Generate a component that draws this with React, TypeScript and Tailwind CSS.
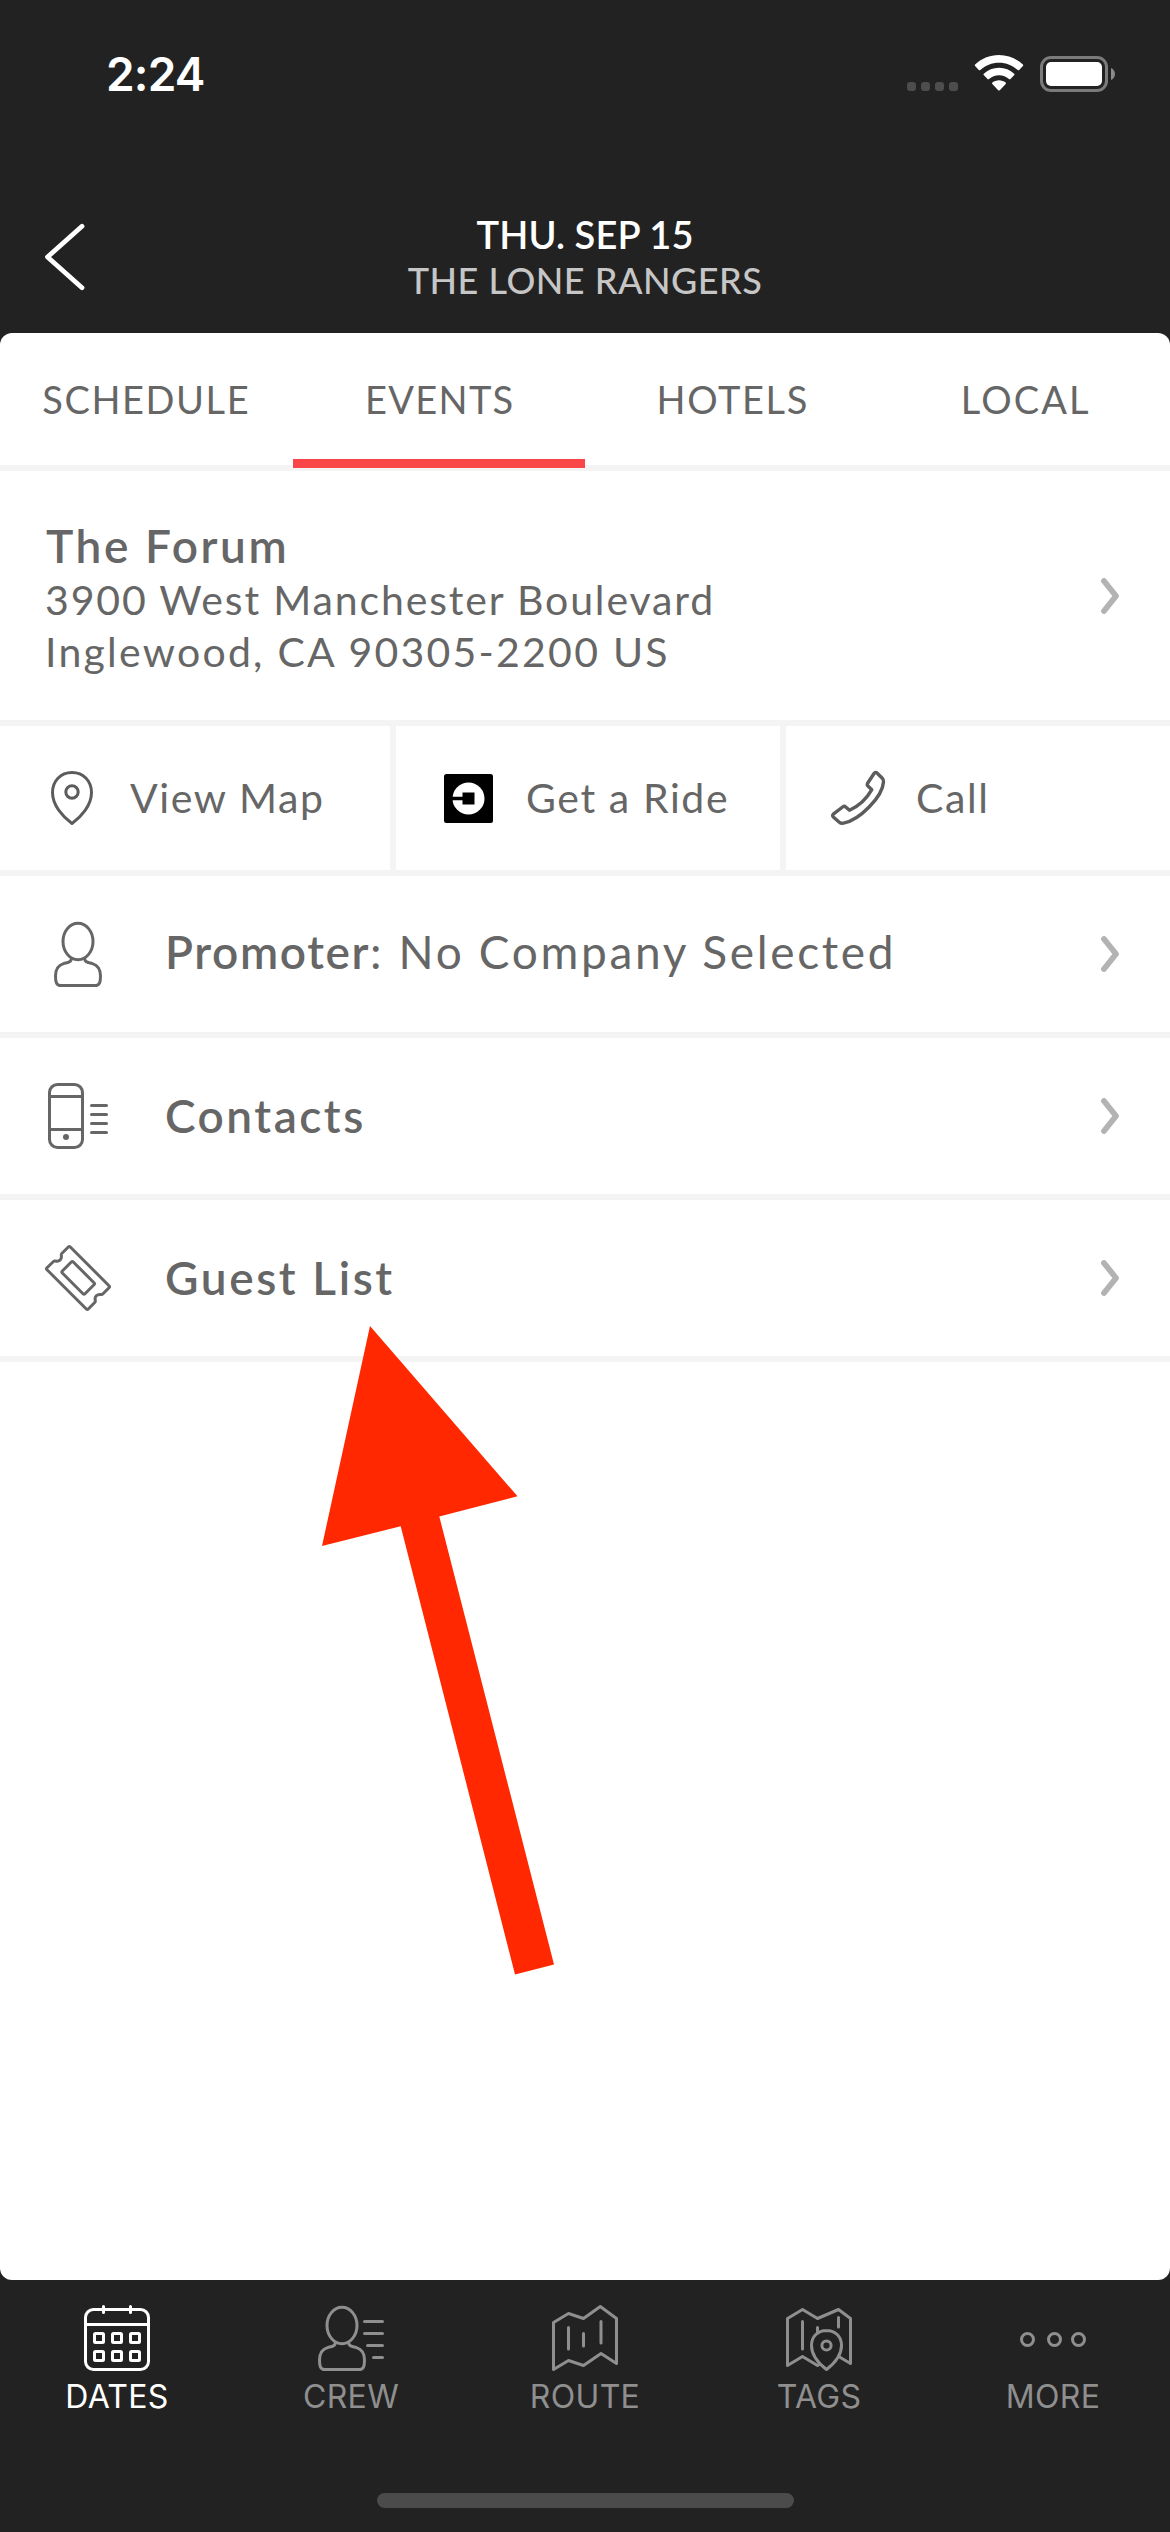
import type { ReactNode } from "react";

const LATO = "font-['Lato',sans-serif]";
const INTER = "font-['Inter',sans-serif]";

function Glyph({ children }: { children: ReactNode }) {
  return (
    <svg
      viewBox="0 0 72 72"
      className="h-[72px] w-[72px] shrink-0"
      fill="none"
      stroke="currentColor"
      strokeWidth="3"
      strokeLinecap="round"
      strokeLinejoin="round"
    >
      {children}
    </svg>
  );
}

function Person() {
  return (
    <>
      <ellipse cx="27" cy="23.5" rx="15" ry="18.2" />
      <path d="M20.3 41.2C19.8 45 15.8 44.6 12.5 45.6C7 47.3 4.5 52.5 4.5 58C4.5 64.5 5.5 67.5 10 67.5H44C48.5 67.5 49.5 64.5 49.5 58C49.5 52.5 47 47.3 41.5 45.6C38.2 44.6 34.2 45 33.7 41.2" />
    </>
  );
}

function ChevronRight() {
  return (
    <svg viewBox="0 0 18 36" className="h-9 w-[18px] shrink-0 text-[#b3b3b3]" fill="none" stroke="currentColor" strokeWidth="5.8" strokeLinecap="round" strokeLinejoin="round">
      <path d="M3 3L15 18L3 33" />
    </svg>
  );
}

function StatusBar() {
  return (
    <div className="flex h-[150px] items-start justify-between pl-[106px] pr-[55px]">
      <div className={`${INTER} mt-[49px] text-[46px] leading-[50px] font-semibold tracking-[-0.8px] text-white`}>2:24</div>
      <div className="mt-[55px] flex h-[37px] items-start">
        <div className="mt-[27px] flex gap-[5px]">
          <span className="h-[9px] w-[9px] rounded-[3px] bg-[#4d4d4d]" />
          <span className="h-[9px] w-[9px] rounded-[3px] bg-[#4d4d4d]" />
          <span className="h-[9px] w-[9px] rounded-[3px] bg-[#4d4d4d]" />
          <span className="h-[9px] w-[9px] rounded-[3px] bg-[#4d4d4d]" />
        </div>
        <svg viewBox="0 0 50 36" className="ml-4 h-9 w-[50px] text-white" fill="currentColor">
          <path d="M25 0C34.3 0 42.8 3.700 48.900 9.600Q49.600 10.300 48.900 11L45.200 15Q44.500 15.700 43.700 15C38.700 10.400 32.200 7.700 25 7.700S11.300 10.400 6.300 15Q5.500 15.700 4.800 15L1.100 11Q0.400 10.300 1.100 9.600C7.200 3.700 15.700 0 25 0Z" />
          <path d="M25 12.800C30.900 12.800 36.200 15 40.200 18.700Q41 19.400 40.300 20.100L36.500 24.100Q35.800 24.800 35 24.100C32.300 21.700 28.800 20.300 25 20.300S17.700 21.700 15 24.100Q14.200 24.800 13.500 24.100L9.700 20.100Q9 19.400 9.800 18.700C13.800 15 19.100 12.800 25 12.800Z" />
          <path d="M25 25.300C27.500 25.300 29.800 26.200 31.600 27.600Q32.300 28.200 31.700 29L25.800 35.200Q25 36 24.200 35.200L18.300 29Q17.700 28.200 18.400 27.600C20.200 26.200 22.500 25.300 25 25.300Z" />
        </svg>
        <svg viewBox="0 0 75 36" className="ml-4 mt-px h-9 w-[75px]">
          <rect x="1.500" y="1.500" width="65" height="33" rx="9.500" fill="none" stroke="#7b7b7b" strokeWidth="3" />
          <rect x="6" y="6" width="56" height="24" rx="5" fill="white" />
          <path d="M71 12C76.300 14 76.300 22 71 24Z" fill="#8a8a8a" />
        </svg>
      </div>
    </div>
  );
}

function Header() {
  return (
    <header className="grid h-[183px] grid-cols-[170px_1fr_170px]">
      <svg viewBox="0 0 40 68" className="ml-[45px] mt-[73px] h-[68px] w-10 text-white" fill="none" stroke="currentColor" strokeWidth="4.800" strokeLinecap="round" strokeLinejoin="round">
        <path d="M37 3.300L2.500 34L37 64.700" />
      </svg>
      <div className={`${LATO} pt-[61px] text-center`}>
        <div className="text-[38px] leading-[46px] font-semibold tracking-[0.1px] text-white">THU. SEP 15</div>
        <div className="text-[36px] leading-[46px] font-medium tracking-[0.5px] text-[#c6c6c6]">THE LONE RANGERS</div>
      </div>
    </header>
  );
}

function Tab({ label, active, className }: { label: string; active?: boolean; className: string }) {
  return (
    <div className={`relative flex items-center justify-center text-[38px] leading-[46px] text-[#666] ${className}`}>
      {label}
      {active && <span className="absolute inset-x-0 -bottom-[3px] h-[9px] bg-[#f84649]" />}
    </div>
  );
}

function Row({ icon, children, className }: { icon: ReactNode; children: ReactNode; className: string }) {
  return (
    <div className="flex h-[162px] items-center border-b-[6px] border-[#f4f4f4] pl-[42px] pr-[51px]">
      <Glyph>{icon}</Glyph>
      <div className={`ml-[51px] flex-1 text-[46px] leading-[56px] font-semibold ${className}`}>{children}</div>
      <ChevronRight />
    </div>
  );
}

function NavItem({ label, active, children }: { label: string; active?: boolean; children: ReactNode }) {
  return (
    <div className={`flex flex-col items-center ${active ? "text-white" : "text-[#8f8f8f]"}`}>
      <Glyph>{children}</Glyph>
      <span className={`${INTER} text-[32px] leading-[45px] tracking-[0.3px]`}>{label}</span>
    </div>
  );
}

export default function App() {
  return (
    <div className="relative flex h-[2532px] w-[1170px] flex-col overflow-hidden bg-[#222]">
      <StatusBar />
      <Header />

      <main className={`${LATO} h-[1947px] overflow-hidden rounded-[12px] bg-white text-[#666]`}>
        <nav className="grid h-[138px] grid-cols-4 border-b-[6px] border-[#f4f4f4]">
          <Tab label="SCHEDULE" className="tracking-[1.6px]" />
          <Tab label="EVENTS" active className="pl-[2px] tracking-[1.3px]" />
          <Tab label="HOTELS" className="pl-[3px] tracking-[1.6px]" />
          <Tab label="LOCAL" className="pl-[4px] tracking-[2.1px]" />
        </nav>

        <section className="flex h-[255px] items-start border-b-[6px] border-[#f4f4f4] pl-[46px] pr-[51px] pt-[49px]">
          <div className="flex-1">
            <h1 className="text-[46px] leading-[52px] font-semibold tracking-[2.6px]">The Forum</h1>
            <p className="-ml-px text-[41px] leading-[56px] tracking-[1.85px]">3900 West Manchester Boulevard</p>
            <p className="-ml-px text-[41px] leading-[48px] tracking-[2.25px]">Inglewood, CA 90305-2200 US</p>
          </div>
          <div className="pt-[58px]">
            <ChevronRight />
          </div>
        </section>

        <section className="grid h-[150px] grid-cols-3 border-b-[6px] border-[#f4f4f4] text-[41px] leading-[50px]">
          <div className="flex items-center pl-12">
            <svg viewBox="0 0 48 60" className="h-[60px] w-12 text-[#5c5c5c]" fill="none" stroke="currentColor" strokeWidth="3" strokeLinejoin="round">
              <path d="M24 4.500C12.500 4.500 4.500 13 4.500 24.500C4.500 37.500 15 49 24 55.500C33 49 43.500 37.500 43.500 24.500C43.500 13 35.500 4.500 24 4.500Z" />
              <circle cx="24" cy="24" r="6.200" />
            </svg>
            <span className="ml-[34px] tracking-[1.6px]">View Map</span>
          </div>
          <div className="flex items-center border-l-[6px] border-[#f4f4f4] pl-12">
            <svg viewBox="0 0 49 49" className="h-[49px] w-[49px]">
              <rect width="49" height="49" rx="2.500" fill="black" />
              <circle cx="24.500" cy="24.500" r="16" fill="white" />
              <path d="M8 22.800H18.500V18.500H30.500V30.500H18.500V26.200H8Z" fill="black" />
            </svg>
            <span className="ml-[33px] tracking-[1.6px]">Get a Ride</span>
          </div>
          <div className="flex items-center border-l-[6px] border-[#f4f4f4] pl-[42px]">
            <svg viewBox="0 0 60 60" className="h-[60px] w-[60px] text-[#5c5c5c]" fill="none" stroke="currentColor" strokeWidth="3.400" strokeLinejoin="round">
              <path d="M46.200 5.200Q47.600 4 49 5L54.300 10.200Q55.700 11.600 55.500 14C54.500 29 31.500 52 15.500 55.200Q13 55.700 11.300 54.200L5.300 49Q3.900 47.600 5.300 46.200L14.600 39Q16.300 37.700 17.700 39L21.500 42.300C30 38.500 38.500 31 43.800 21.700L40.200 18.300Q38.700 16.900 39.600 15.200Z" />
            </svg>
            <span className="ml-[28px] tracking-[1.6px]">Call</span>
          </div>
        </section>

        <Row
          className="pb-[5px]"
          icon={
            <g transform="translate(9 0)">
              <Person />
            </g>
          }
        >
          <span className="tracking-[1.6px]">Promoter</span>
          <span className="font-normal tracking-[2.65px]">: No Company Selected</span>
        </Row>
        <Row
          className="tracking-[2.5px]"
          icon={
            <>
              <rect x="7.500" y="4.500" width="33" height="63" rx="8" />
              <path d="M7.500 16.500H40.500M7.500 49.500H40.500" />
              <path d="M49.500 25.500H64.500M49.500 34.500H64.500M49.500 43.500H64.500M49.500 52.500H64.500" />
              <circle cx="24" cy="57" r="3" fill="currentColor" stroke="none" />
            </>
          }
        >
          Contacts
        </Row>
        <Row
          className="tracking-[2.6px]"
          icon={
            <>
              <path d="M26.300 5Q27.300 4 28.300 5L67 43.700Q68 44.700 67 45.700L60.800 52Q60.300 52.700 59 52.500C55 52 52.300 54.500 53.300 58.500Q53.500 59.700 52.700 60.500L46.300 67Q45.300 68 44.300 67L5 27.800Q4 26.800 5 25.800L11.500 19.500Q12.300 18.700 13.500 19C17.500 20 20 17 19.300 13Q19.200 12 20 11.200Z" />
              <path d="M29.300 20Q30.300 19 31.300 20L52 40.700Q53 41.700 52 42.700L43 51.700Q42 52.700 41 51.700L20.300 31Q19.300 30 20.300 29Z" />
            </>
          }
        >
          Guest List
        </Row>
      </main>

      <nav className="grid grid-cols-5 pt-[22px]">
        <NavItem label="DATES" active>
          <rect x="4.500" y="7.500" width="63" height="60" rx="8" />
          <path d="M4.500 22.500H67.500M22.500 4.500V10.500M49.500 4.500V10.500" />
          <rect x="13.500" y="31.500" width="9" height="9" rx="1" />
          <rect x="31.500" y="31.500" width="9" height="9" rx="1" />
          <rect x="49.500" y="31.500" width="9" height="9" rx="1" />
          <rect x="13.500" y="49.500" width="9" height="9" rx="1" />
          <rect x="31.500" y="49.500" width="9" height="9" rx="1" />
          <rect x="49.500" y="49.500" width="9" height="9" rx="1" />
        </NavItem>
        <NavItem label="CREW">
          <Person />
          <path d="M49.500 19.500H67.500M49.500 31.500H67.500M52.500 43.500H67.500M58.500 55.500H67.500" />
        </NavItem>
        <NavItem label="ROUTE">
          <path d="M4.500 20.500L19.500 11.500L34.500 16.500L51.300 4.500L67.500 16.500V61.500L52 51.500L34.500 63.500L19.500 58.500L4.500 67.500Z" />
          <path d="M19.500 25.500V47M34.500 31.500V44M52 19.500V41" />
        </NavItem>
        <NavItem label="TAGS">
          <path d="M56.500 55L67.500 61.500V16.500L55.500 7.500L34.500 16.500L19.500 7.500L4.500 16.500V63.500L19.500 54.500L34.500 63.500L36.500 62" />
          <path d="M19.500 19.500V47M34.500 25.500V31M55.500 15.500V25" />
          <path d="M43.500 28.500C34.300 28.500 28.500 35 28.500 43.500C28.500 54 37 62.500 43.500 67.500C50 62.500 58.500 54 58.500 43.500C58.500 35 52.700 28.500 43.500 28.500Z" />
          <circle cx="43.500" cy="43.500" r="4.600" />
        </NavItem>
        <NavItem label="MORE">
          <circle cx="10.500" cy="37.500" r="6" />
          <circle cx="37.500" cy="37.500" r="6" />
          <circle cx="61.500" cy="37.500" r="6" />
        </NavItem>
      </nav>
      <div className="ml-[377px] mt-[74px] h-[15px] w-[417px] rounded-full bg-[#4b4b4b]" />

      <svg viewBox="0 0 232 650" className="absolute left-[322px] top-[1325px] h-[650px] w-[232px] text-[#ff2800]" fill="currentColor">
        <path d="M48 1L195.500 171.300L117.300 191.500L232 639.500L193 649.500L78.700 201.300L0 221Z" />
      </svg>
    </div>
  );
}
